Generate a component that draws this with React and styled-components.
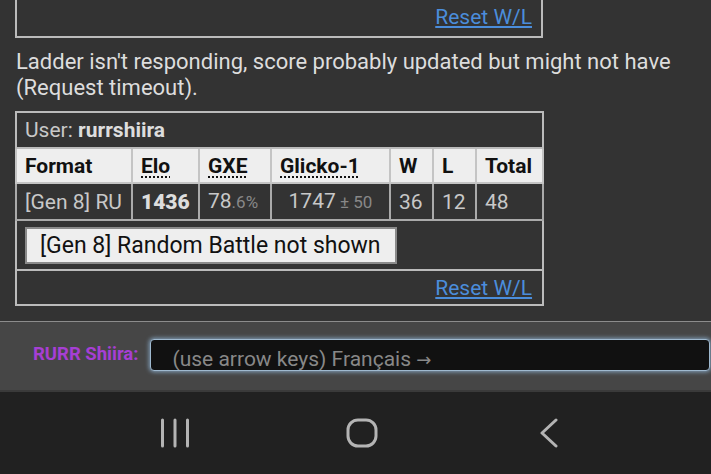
import React from "react";
import styled, { createGlobalStyle } from "styled-components";

const Global = createGlobalStyle`
  html, body { margin: 0; padding: 0; background: #333; }
  body { font-family: Roboto, "Noto Sans", "Liberation Sans", sans-serif; }
`;

const Screen = styled.div`
  width: 711px;
  height: 474px;
  display: flex;
  flex-direction: column;
  overflow: hidden;
  background: #333;
`;

const Main = styled.div`
  height: 321px;
  padding: 0 0 0 15px;
  box-sizing: border-box;
  display: flex;
  flex-direction: column;
  align-items: flex-start;
`;

const TopBox = styled.div`
  width: 528px;
  height: 38px;
  box-sizing: border-box;
  border: 2px solid #bbb;
  border-top: 0;
  display: flex;
  justify-content: flex-end;
  align-items: flex-end;
  padding: 0 9px 7px 0;
`;

const Link = styled.a`
  color: #4b8ddb;
  font-size: 21px;
  line-height: 24px;
  text-decoration: underline;
  text-decoration-thickness: 2px;
  text-underline-offset: 2px;
  cursor: pointer;
`;

const Message = styled.p`
  margin: 11px 0 10px 1px;
  color: #ddd;
  font-size: 22px;
  line-height: 26px;
`;

const Table = styled.table`
  width: 527px;
  table-layout: fixed;
  border-collapse: collapse;
  font-size: 21px;
  color: #c8c8c8;
`;

const Cell = styled.td`
  border: 2px solid ${(p) => (p.$head ? "#c4c4c4" : "#aaa")};
  padding: 0 0 0 ${(p) => (p.$center ? "0" : "8px")};
  height: ${(p) => p.$h || 33}px;
  text-align: ${(p) => (p.$center ? "center" : "left")};
  background: ${(p) => (p.$head ? "#eee" : "transparent")};
  color: ${(p) => (p.$head ? "#111" : "#c8c8c8")};
  font-weight: ${(p) => (p.$bold ? 700 : 400)};
  white-space: nowrap;
  line-height: 24px;
`;

const Outer = styled.tr`
  & > td { border-color: #bbb; }
`;

const Abbr = styled.span`
  text-decoration: underline dotted;
  text-decoration-thickness: 2px;
  text-underline-offset: 4px;
`;

const Small = styled.small`
  font-size: 17px;
  color: #888;
`;

const Strong = styled.b`
  color: #ddd;
`;

const NoteButton = styled.button`
  font-family: inherit;
  font-size: 23px;
  color: #111;
  background: #eee;
  border: 2px solid #8a8a8a;
  border-radius: 0;
  height: 37px;
  padding: 0 14px 0 13px;
  line-height: 33px;
`;

const RightCell = styled(Cell)`
  text-align: right;
  padding-right: 10px;
`;

const ChatBar = styled.div`
  height: 71px;
  box-sizing: border-box;
  background: #464646;
  border-top: 1px solid #8c8c8c;
  border-bottom: 2px solid #3a3a3a;
  display: flex;
  align-items: center;
  padding: 0 1px 2px 33px;
  gap: 12px;
`;

const Name = styled.span`
  color: #a63fd4;
  font-weight: 700;
  font-size: 18.5px;
  margin-bottom: 3px;
`;

const ChatInput = styled.div`
  flex: 1;
  height: 32px;
  box-sizing: border-box;
  background: #111;
  border: 1px solid #9fb9cf;
  border-radius: 4px;
  box-shadow: 0 0 4px 1px rgba(150, 190, 225, 0.75);
  color: #888;
  font-size: 21px;
  padding: 7px 0 0 21px;
  line-height: 24px;
  white-space: nowrap;
  overflow: hidden;
`;

const Arrow = styled.span`
  font-family: "DejaVu Sans", sans-serif;
  font-size: 18px;
`;

const NavBar = styled.div`
  flex: 1;
  background: #212121;
  display: flex;
  justify-content: center;
  align-items: center;
  padding-left: 13px;
`;

const NavItem = styled.div`
  width: 187px;
  display: flex;
  justify-content: center;
  align-items: center;
  height: 30px;
`;

const Icon = ({ children, w }) => (
  <svg width={w} height="30" viewBox={`0 0 ${w} 30`} fill="none" stroke="#b4b4b4" strokeWidth="3" strokeLinecap="round" strokeLinejoin="round">
    {children}
  </svg>
);

export default function App() {
  return (
    <Screen>
      <Global />
      <Main>
        <TopBox>
          <Link>Reset W/L</Link>
        </TopBox>
        <Message>
          Ladder isn't responding, score probably updated but might not have
          <br />
          (Request timeout).
        </Message>
        <Table>
          <colgroup>
            <col style={{ width: 116 }} />
            <col style={{ width: 67 }} />
            <col style={{ width: 72 }} />
            <col style={{ width: 119 }} />
            <col style={{ width: 43 }} />
            <col style={{ width: 43 }} />
            <col style={{ width: 67 }} />
          </colgroup>
          <tbody>
            <Outer>
              <Cell colSpan={7} $h={34}>
                User: <Strong>rurrshiira</Strong>
              </Cell>
            </Outer>
            <tr>
              <Cell $head $bold>Format</Cell>
              <Cell $head $bold><Abbr>Elo</Abbr></Cell>
              <Cell $head $bold><Abbr>GXE</Abbr></Cell>
              <Cell $head $bold><Abbr>Glicko-1</Abbr></Cell>
              <Cell $head $bold>W</Cell>
              <Cell $head $bold>L</Cell>
              <Cell $head $bold>Total</Cell>
            </tr>
            <tr>
              <Cell $h={35}>[Gen 8] RU</Cell>
              <Cell $h={35} $bold><Strong>1436</Strong></Cell>
              <Cell $h={35}>78<Small>.6%</Small></Cell>
              <Cell $h={35} $center>1747<Small> ± 50</Small></Cell>
              <Cell $h={35}>36</Cell>
              <Cell $h={35}>12</Cell>
              <Cell $h={35}>48</Cell>
            </tr>
            <Outer>
              <Cell colSpan={7} $h={48}>
                <NoteButton>[Gen 8] Random Battle not shown</NoteButton>
              </Cell>
            </Outer>
            <Outer>
              <RightCell colSpan={7} $h={33}>
                <Link>Reset W/L</Link>
              </RightCell>
            </Outer>
          </tbody>
        </Table>
      </Main>
      <ChatBar>
        <Name>RURR Shiira:</Name>
        <ChatInput>(use arrow keys) Français <Arrow>→</Arrow></ChatInput>
      </ChatBar>
      <NavBar>
        <NavItem>
          <Icon w={30}>
            <line x1="2.5" y1="2" x2="2.5" y2="28" />
            <line x1="15" y1="2" x2="15" y2="28" />
            <line x1="27.5" y1="2" x2="27.5" y2="28" />
          </Icon>
        </NavItem>
        <NavItem>
          <Icon w={32}>
            <rect x="2" y="2" width="28" height="26" rx="10" />
          </Icon>
        </NavItem>
        <NavItem>
          <Icon w={20}>
            <polyline points="17,2 3,15 17,28" />
          </Icon>
        </NavItem>
      </NavBar>
    </Screen>
  );
}
